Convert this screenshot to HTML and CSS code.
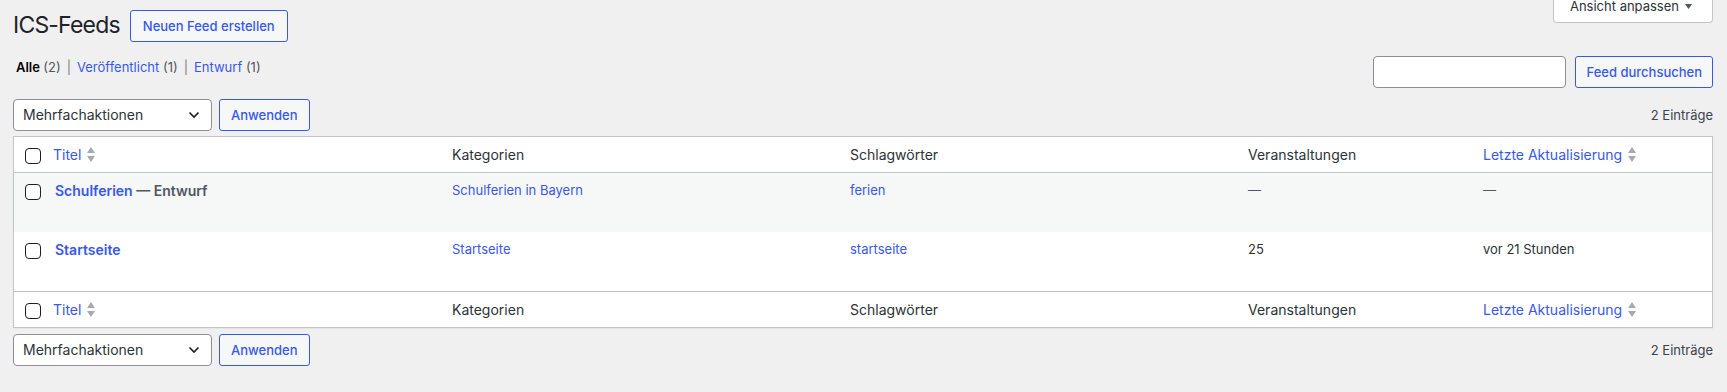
FILE: index.html
```html
<!DOCTYPE html>
<html lang="de">
<head>
    <meta charset="UTF-8">
    <meta name="viewport" content="width=device-width, initial-scale=1.0">
    <title>ICS-Feeds</title>
    <link rel="stylesheet" href="styles.css">
</head>
<body>
    <div class="screen-meta-links">
        <button class="screen-options" type="button">
            Ansicht anpassen
            <svg class="tab-arrow" width="7" height="5" viewBox="0 0 7 5"><path d="M0 0h7L3.5 5z" fill="#50575e"/></svg>
        </button>
    </div>

    <div class="wrap">
        <div class="page-header">
            <h1>ICS-Feeds</h1>
            <a class="page-title-action" href="#">Neuen Feed erstellen</a>
        </div>

        <div class="filters">
            <ul class="subsubsub">
                <li><a class="current" href="#">Alle <span class="count">(2)</span></a><span class="sep">|</span></li>
                <li><a href="#">Veröffentlicht <span class="count">(1)</span></a><span class="sep">|</span></li>
                <li><a href="#">Entwurf <span class="count">(1)</span></a></li>
            </ul>
            <div class="search-box">
                <input class="search-input" type="search">
                <button class="button" type="button">Feed durchsuchen</button>
            </div>
        </div>

        <div class="tablenav top">
            <div class="bulk-actions">
                <div class="select">
                    <span>Mehrfachaktionen</span>
                    <svg width="12" height="8" viewBox="0 0 12 8"><path d="M1.5 1.5 6 6l4.5-4.5" fill="none" stroke="#1e1e1e" stroke-width="1.6"/></svg>
                </div>
                <button class="button" type="button">Anwenden</button>
            </div>
            <span class="displaying-num">2 Einträge</span>
        </div>

        <table class="list-table">
            <colgroup>
                <col class="col-check">
                <col>
                <col class="col-wide">
                <col class="col-wide">
                <col class="col-events">
                <col class="col-date">
            </colgroup>
            <thead>
                <tr>
                    <th class="check-column"><input type="checkbox"></th>
                    <th><a class="sortable" href="#">Titel <svg width="8" height="15" viewBox="0 0 8 15"><path d="M4 0 8 6H0z M0 9h8l-4 6z" fill="#a7aaad"/></svg></a></th>
                    <th>Kategorien</th>
                    <th>Schlagwörter</th>
                    <th>Veranstaltungen</th>
                    <th><a class="sortable" href="#">Letzte Aktualisierung <svg width="8" height="15" viewBox="0 0 8 15"><path d="M4 0 8 6H0z M0 9h8l-4 6z" fill="#a7aaad"/></svg></a></th>
                </tr>
            </thead>
            <tbody>
                <tr class="alternate">
                    <th class="check-column"><input type="checkbox"></th>
                    <td class="column-title"><strong><a class="row-title" href="#">Schulferien</a> — Entwurf</strong></td>
                    <td><a href="#">Schulferien in Bayern</a></td>
                    <td><a href="#">ferien</a></td>
                    <td class="empty">—</td>
                    <td class="empty">—</td>
                </tr>
                <tr>
                    <th class="check-column"><input type="checkbox"></th>
                    <td class="column-title"><strong><a class="row-title" href="#">Startseite</a></strong></td>
                    <td><a href="#">Startseite</a></td>
                    <td><a href="#">startseite</a></td>
                    <td>25</td>
                    <td>vor 21 Stunden</td>
                </tr>
            </tbody>
            <tfoot>
                <tr>
                    <th class="check-column"><input type="checkbox"></th>
                    <th><a class="sortable" href="#">Titel <svg width="8" height="15" viewBox="0 0 8 15"><path d="M4 0 8 6H0z M0 9h8l-4 6z" fill="#a7aaad"/></svg></a></th>
                    <th>Kategorien</th>
                    <th>Schlagwörter</th>
                    <th>Veranstaltungen</th>
                    <th><a class="sortable" href="#">Letzte Aktualisierung <svg width="8" height="15" viewBox="0 0 8 15"><path d="M4 0 8 6H0z M0 9h8l-4 6z" fill="#a7aaad"/></svg></a></th>
                </tr>
            </tfoot>
        </table>

        <div class="tablenav bottom">
            <div class="bulk-actions">
                <div class="select">
                    <span>Mehrfachaktionen</span>
                    <svg width="12" height="8" viewBox="0 0 12 8"><path d="M1.5 1.5 6 6l4.5-4.5" fill="none" stroke="#1e1e1e" stroke-width="1.6"/></svg>
                </div>
                <button class="button" type="button">Anwenden</button>
            </div>
            <span class="displaying-num">2 Einträge</span>
        </div>
    </div>
</body>
</html>
```

FILE: styles.css
```css
* {
    box-sizing: border-box;
}

body {
    margin: 0;
    background-color: #f0f0f1;
    color: #3c434a;
    font-family: Inter, "Noto Sans", sans-serif;
    font-size: 13px;
    line-height: 1.4em;
}

a {
    color: #3858e9;
    text-decoration: none;
}

/* Tab oben rechts */
.screen-meta-links {
    float: right;
    margin-right: 14px;
}

.screen-options {
    display: flex;
    align-items: flex-start;
    gap: 6px;
    height: 24px;
    margin-top: -1px;
    padding: 0 20px 0 16px;
    background-color: #fff;
    border: 1px solid #c3c4c7;
    border-top: none;
    border-radius: 0 0 4px 4px;
    color: #2c3338;
    font-family: inherit;
    font-size: 13px;
    line-height: 15px;
}

.tab-arrow {
    margin-top: 5px;
}

.wrap {
    padding: 10px 14px 0 13px;
}

.page-header {
    display: flex;
    align-items: center;
    gap: 10px;
    height: 32px;
}

.page-header h1 {
    margin: 0;
    font-size: 23px;
    font-weight: 400;
    line-height: 1.3;
    letter-spacing: -0.8px;
    color: #1d2327;
}

.page-title-action,
.button {
    display: inline-flex;
    align-items: center;
    height: 32px;
    padding: 0 12px;
    background-color: #f6f7f7;
    border: 1px solid #3858e9;
    border-radius: 3px;
    color: #3858e9;
    font-family: inherit;
    font-size: 13px;
    font-weight: 500;
}

.filters {
    display: flex;
    justify-content: space-between;
    align-items: flex-start;
    margin-top: 14px;
}

.subsubsub {
    display: flex;
    margin: 1px 0 0;
    padding: 0 0 0 3px;
    list-style: none;
    line-height: 20px;
}

.subsubsub .current {
    color: #000;
    font-weight: 600;
}

.subsubsub .count {
    color: #50575e;
    font-weight: 400;
}

.subsubsub .sep {
    padding: 0 6px;
    color: #787c82;
}

.search-box {
    display: flex;
    gap: 9px;
}

.search-input {
    width: 193px;
    height: 32px;
    margin: 0;
    background-color: #fff;
    border: 1px solid #8c8f94;
    border-radius: 4px;
}

.search-box .button {
    padding: 0 10px;
}

.tablenav {
    display: flex;
    justify-content: space-between;
    align-items: center;
    height: 32px;
}

.tablenav.top {
    margin: 11px 0 5px;
}

.tablenav.bottom {
    margin-top: 6px;
}

.bulk-actions {
    display: flex;
    gap: 7px;
}

.bulk-actions .button {
    padding: 0 11px;
}

.select {
    display: flex;
    justify-content: space-between;
    align-items: center;
    width: 199px;
    height: 32px;
    padding: 0 11px 0 9px;
    background-color: #fff;
    border: 1px solid #8c8f94;
    border-radius: 4px;
    color: #2c3338;
    font-size: 14px;
}

.displaying-num {
    color: #3c434a;
}

/* Tabelle */
.list-table {
    width: 100%;
    table-layout: fixed;
    border-collapse: separate;
    border-spacing: 0;
    background-color: #fff;
    border: 1px solid #c3c4c7;
    box-shadow: 0 1px 1px rgba(0, 0, 0, 0.04);
}

.col-check {
    width: 29px;
}

.col-wide {
    width: 398px;
}

.col-events {
    width: 235px;
}

.col-date {
    width: 239px;
}

.list-table th,
.list-table td {
    padding: 8px 10px;
    text-align: left;
    vertical-align: top;
}

.list-table thead th,
.list-table tfoot th {
    color: #2c3338;
    font-size: 14px;
    font-weight: 400;
    line-height: 19px;
}

.list-table thead th {
    border-bottom: 1px solid #c3c4c7;
}

.list-table tfoot th {
    border-top: 1px solid #c3c4c7;
}

.list-table tbody tr {
    height: 59px;
}

.list-table tbody td {
    color: #2c3338;
    font-size: 13px;
    line-height: 19.5px;
}

.list-table tbody .empty {
    color: #50575e;
}

.alternate {
    background-color: #f6f7f7;
}

.list-table .check-column {
    padding: 11px 0 0 3px;
}

.check-column input {
    appearance: none;
    display: block;
    width: 16px;
    height: 16px;
    margin: 0 0 0 8px;
    background-color: #fff;
    border: 1px solid #1e1e1e;
    border-radius: 4px;
}

.sortable {
    display: inline-flex;
    align-items: center;
    gap: 6px;
}

.column-title strong {
    display: block;
    padding-left: 2px;
    color: #50575e;
    font-size: 14px;
    font-weight: 600;
    line-height: 20px;
}
```
